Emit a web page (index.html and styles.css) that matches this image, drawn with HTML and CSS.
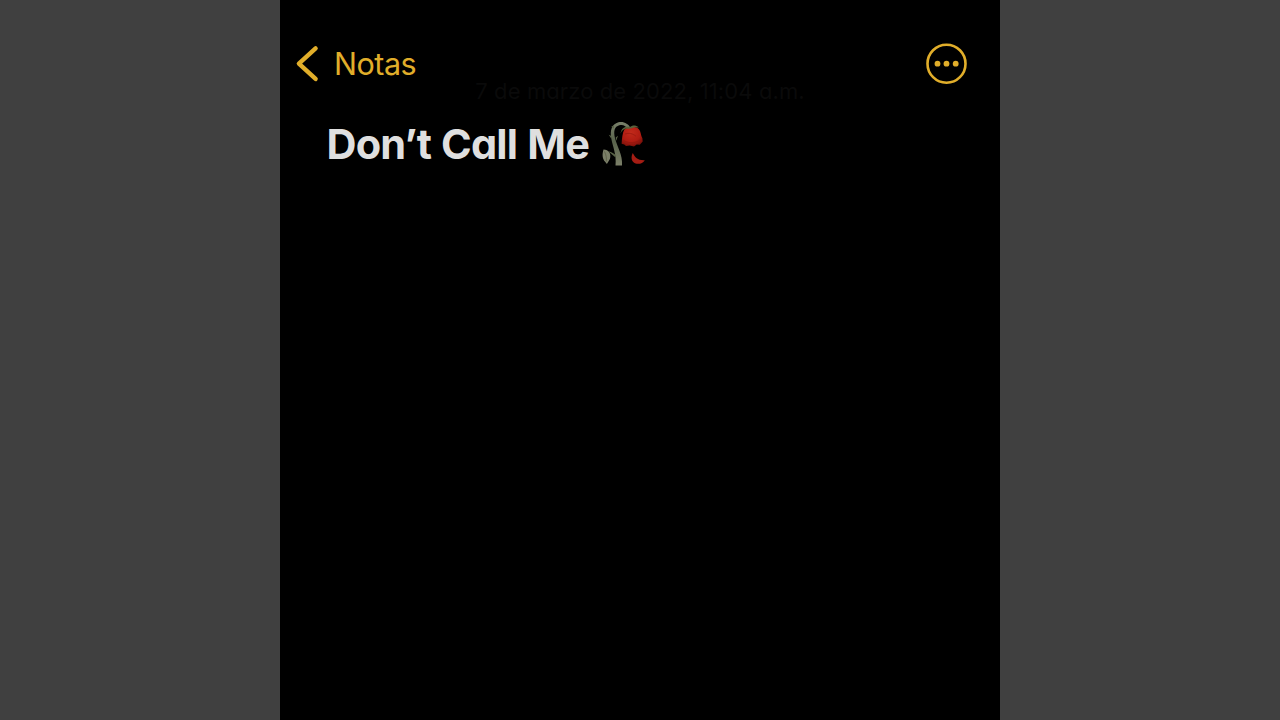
FILE: index.html
```html
<!DOCTYPE html>
<html lang="es">
<head>
<meta charset="utf-8">
<title>Notas</title>
<link rel="stylesheet" href="styles.css">
</head>
<body>
<main class="note">
  <header class="toolbar">
    <div class="back">
      <svg class="chevron" width="24" height="40" viewBox="0 0 24 40"><path d="M20.6 4.4 3.9 19.6 20.6 34.9"/></svg>
      <span class="back-label">Notas</span>
    </div>
    <svg class="more" width="42" height="42" viewBox="0 0 42 42">
      <circle class="ring" cx="20.5" cy="20.7" r="19"/>
      <circle cx="11.5" cy="20.7" r="2.9"/><circle cx="20.5" cy="20.7" r="2.9"/><circle cx="29.7" cy="20.7" r="2.9"/>
    </svg>
  </header>
  <time class="date">7 de marzo de 2022, 11:04 a.m.</time>
  <div class="heading">
    <h1 class="title">Don’t Call Me</h1>
    <svg class="rose" width="50" height="50" viewBox="0 0 50 50">
      <defs>
        <linearGradient id="stem" x1="0" y1="0" x2="0" y2="1"><stop offset="0" stop-color="#79806a"/><stop offset=".45" stop-color="#59634c"/><stop offset="1" stop-color="#7b7f68"/></linearGradient>
        <radialGradient id="bloom" cx=".45" cy=".3" r=".75"><stop offset="0" stop-color="#c22a1b"/><stop offset=".6" stop-color="#b01c12"/><stop offset="1" stop-color="#720f09"/></radialGradient>
      </defs>
      <path fill="url(#stem)" d="M30.8 10.2C28.3 5.3 23.3 3 18.5 4.2 11.5 6 9.9 12.3 11.3 20.5 12.8 29 16.6 36 15.5 47.5H22C22.8 36.5 17 28.5 15 20.2 13.3 12.8 14.5 8.6 19.3 7.2 23 6.2 26.1 8 27.8 11.2Z"/>
      <path fill="#596347" d="M14 7.5 11.2 8.8 13.8 10.5ZM11.5 18 8.8 16.7 11.3 20.8ZM15.7 19.5 18 17.8 16.2 22.8ZM16.4 37.5C13 35 10.5 33.5 8.2 33.2L15 39Z"/>
      <path fill="#7b7f68" d="M3.5 31.5C8.8 31.7 11.6 36 9.9 41L6.9 46 5.3 44C2.1 40.8 2.1 36 3.5 31.5Z"/>
      <path fill="none" stroke="#55583f" stroke-width=".7" d="M4.5 33.5C6.2 37 6.7 40.5 6.3 43.5"/>
      <path fill="url(#bloom)" d="M24.3 11.5C27 8.4 34 7.6 37.8 10.2 41 12.5 40.3 16 42.4 20.3L42.7 23.4 39.8 26.7 36.7 26.4 34 28.5 29.7 27.5 26 28.1 24.2 26.4 21.6 25.7C22 20 22.4 15.4 24.3 11.5Z"/>
      <path fill="none" stroke="#8e160e" stroke-width=".6" d="M25 16C28.8 14.8 32.5 15.2 36 18.3M23.5 22.5C29 25.8 36 25.3 41.8 21"/>
      <path fill="#58633d" d="M20.5 15.5C21.6 9.8 25 7.8 29.8 9.2 32.5 7.2 35.2 6.8 38.8 9.4L34.5 9.2C32 9.8 30.3 11.2 27.2 10.5 24.1 10.6 22 12 20.5 15.5Z"/>
      <path fill="#a51d14" d="M32.8 35C35.2 39.4 37.5 42.5 44.8 42.2 42.8 45.9 36.8 47.2 33.5 44.2 30.9 41.8 31.3 38 32.8 35Z"/>
    </svg>
  </div>
</main>
</body>
</html>
```
FILE: styles.css
```css
body {
  margin: 0;
  background: #404040;
  font-family: Inter, "Noto Sans", sans-serif;
}
.note {
  box-sizing: border-box;
  width: 720px;
  height: 720px;
  margin: 0 auto;
  padding-top: 43px;
  background: #000;
  overflow: hidden;
}
.toolbar {
  display: flex;
  justify-content: space-between;
  align-items: center;
  height: 42px;
  padding: 0 32px 0 15px;
  color: #e1ae2a;
}
.back {
  display: flex;
  align-items: center;
}
.chevron {
  fill: none;
  stroke: currentColor;
  stroke-width: 4.4;
  stroke-linecap: round;
  stroke-linejoin: round;
}
.back-label {
  margin-left: 15px;
  font-size: 30.5px;
  line-height: 40px;
  letter-spacing: -0.5px;
}
.more {
  fill: currentColor;
}
.ring {
  fill: none;
  stroke: currentColor;
  stroke-width: 2.6;
}
.date {
  display: block;
  height: 24px;
  margin-top: -6px;
  color: #0a0a0a;
  font-size: 22px;
  line-height: 24px;
  letter-spacing: 0.1px;
  text-align: center;
  white-space: nowrap;
  font-feature-settings: "cv11";
}
.heading {
  display: flex;
  height: 50px;
  margin-top: 15px;
  padding-left: 46px;
}
.title {
  width: 274px;
  margin: 0;
  color: #dfdfdf;
  font-size: 41.5px;
  font-weight: 700;
  line-height: 53px;
  letter-spacing: -0.8px;
  word-spacing: 1px;
  text-indent: 0.5px;
  white-space: nowrap;
  font-feature-settings: "cv11";
}
```
